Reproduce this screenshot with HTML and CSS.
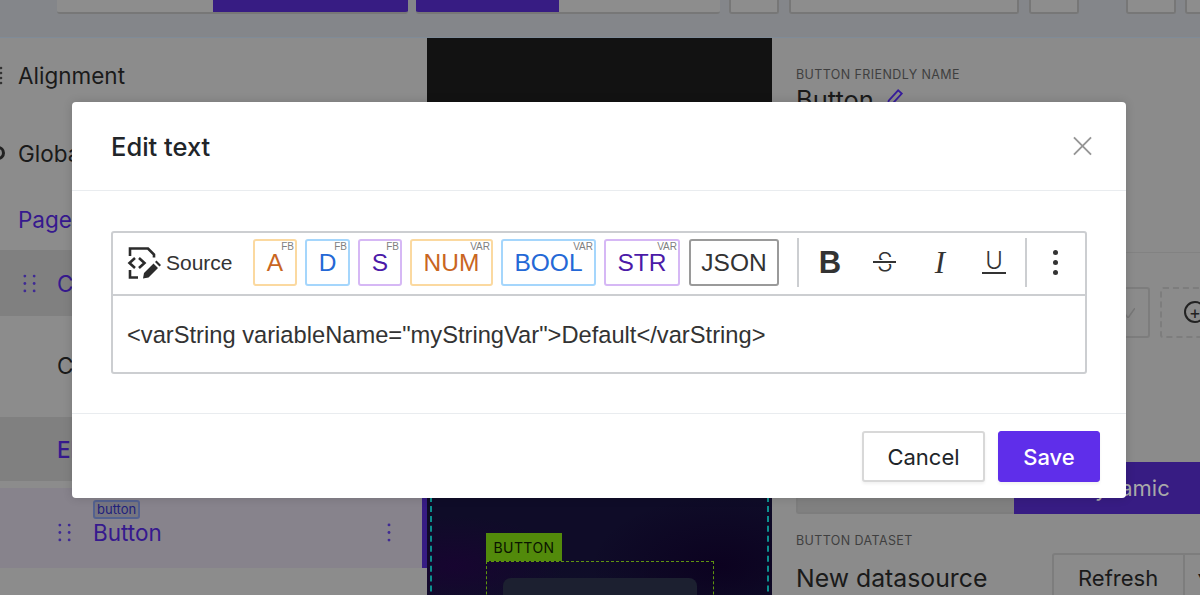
FILE: index.html
```html
<!DOCTYPE html>
<html lang="en">
<head>
<meta charset="utf-8">
<title>Edit text</title>
<link rel="stylesheet" href="styles.css">
</head>
<body>
<div class="page">
  <header class="topbar">
    <div class="seg seg-a"><span class="seg-plain seg-p1"></span><span class="seg-on seg-p2"></span></div>
    <div class="seg seg-b"><span class="seg-on seg-p3"></span><span class="seg-plain seg-p4"></span></div>
    <div class="tb tb-1"></div>
    <div class="tb tb-2"></div>
    <div class="tb tb-1"></div>
    <div class="tb tb-3"></div>
    <div class="tb tb-4"></div>
  </header>
  <main class="work">
    <aside class="side">
      <div class="row row-align">
        <svg class="cut-dots" viewBox="0 0 4 20"><g class="dark-dot"><circle cx="2" cy="2" r="1.300"/><circle cx="2" cy="7" r="1.300"/><circle cx="2" cy="12" r="1.300"/><circle cx="2" cy="17" r="1.300"/></g></svg>
        <span>Alignment</span>
      </div>
      <div class="row row-global"><span class="ring"></span><span>Global</span></div>
      <div class="row row-page"><span class="purple">Pages</span></div>
      <div class="row row-dark row-c">
        <svg class="grip" viewBox="0 0 14 20"><g class="grip-dot"><circle cx="2" cy="2" r="1.500"/><circle cx="12" cy="2" r="1.500"/><circle cx="2" cy="10" r="1.500"/><circle cx="12" cy="10" r="1.500"/><circle cx="2" cy="18" r="1.500"/><circle cx="12" cy="18" r="1.500"/></g></svg>
        <span class="purple">Content</span>
      </div>
      <div class="row row-plain"><span>Content</span></div>
      <div class="row row-dark row-e"><span class="purple strong">Elements</span></div>
      <div class="row row-selected">
        <svg class="grip grip-sel" viewBox="0 0 14 20"><g class="grip-dot"><circle cx="2" cy="2" r="1.500"/><circle cx="12" cy="2" r="1.500"/><circle cx="2" cy="10" r="1.500"/><circle cx="12" cy="10" r="1.500"/><circle cx="2" cy="18" r="1.500"/><circle cx="12" cy="18" r="1.500"/></g></svg>
        <div class="sel-name"><span class="tag">button</span><span class="purple">Button</span></div>
        <svg class="kebab" viewBox="0 0 4 20"><g class="grip-dot"><circle cx="2" cy="2" r="1.500"/><circle cx="2" cy="10" r="1.500"/><circle cx="2" cy="18" r="1.500"/></g></svg>
      </div>
    </aside>
    <section class="canvas">
      <div class="canvas-top"></div>
      <div class="canvas-body">
        <div class="frame">
          <div class="el-label">BUTTON</div>
          <div class="el-box"><div class="el-card"></div></div>
        </div>
      </div>
    </section>
    <aside class="props">
      <div class="label">BUTTON FRIENDLY NAME</div>
      <div class="name-line"><span>Button</span>
        <svg class="pencil" viewBox="0 0 20 20"><path d="M2 18l1-5L13.500 1.500l4 3.500L7 16.500z"/></svg>
      </div>
      <div class="rule"></div>
      <div class="picker">
        <div class="select"><svg class="chev" viewBox="0 0 14 10"><path d="M0 0l7 10 7-10"/></svg></div>
        <div class="add"><span class="plus">+</span></div>
      </div>
      <div class="modes"><div class="mode-off"></div><div class="mode-on">Dynamic</div></div>
      <div class="label label-ds">BUTTON DATASET</div>
      <div class="ds"><span class="ds-name">New datasource</span><div class="refresh"><span class="refresh-text">Refresh</span><span class="refresh-more">▾</span></div></div>
    </aside>
  </main>
</div>

<div class="modal" role="dialog" aria-label="Edit text">
  <div class="modal-head">
    <h2 class="modal-title">Edit text</h2>
    <svg class="close" viewBox="0 0 20 20"><path d="M1 1l18 18M19 1L1 19"/></svg>
  </div>
  <div class="modal-body">
    <div class="editor">
      <div class="toolbar">
        <div class="source">
          <svg class="source-icon" viewBox="0 0 32 32">
            <path class="si" d="M2 9V1.500h18l6 6v3M2 23v7.500h8"/>
            <path class="si" d="M7 11l-5.500 5 5.500 5M11 11l5.500 5-5.500 5"/>
            <path class="si-fill" d="M15 31.500l1-5.500 9.500-9.500 4.500 4.500-9.500 9.500zM27 15l1.500-1.500 4.500 4.500-1.500 1.500z"/>
          </svg>
          <span>Source</span>
        </div>
        <button class="tk tk-orange tk-a">A<sup>FB</sup></button>
        <button class="tk tk-blue tk-d">D<sup>FB</sup></button>
        <button class="tk tk-violet tk-s">S<sup>FB</sup></button>
        <button class="tk tk-orange tk-num">NUM<sup>VAR</sup></button>
        <button class="tk tk-blue tk-bool">BOOL<sup>VAR</sup></button>
        <button class="tk tk-violet tk-str">STR<sup>VAR</sup></button>
        <button class="tk tk-json">JSON</button>
        <span class="sep sep-1"></span>
        <span class="fmt fmt-b">B</span>
        <span class="fmt fmt-s">S</span>
        <span class="fmt fmt-i">I</span>
        <span class="fmt fmt-u"><span class="u-letter">U</span></span>
        <span class="sep sep-2"></span>
        <svg class="more" viewBox="0 0 5 25"><circle cx="2.500" cy="2.500" r="2.500"/><circle cx="2.500" cy="12.500" r="2.500"/><circle cx="2.500" cy="22.500" r="2.500"/></svg>
      </div>
      <div class="content">&lt;varString variableName="myStringVar"&gt;Default&lt;/varString&gt;</div>
    </div>
  </div>
  <div class="modal-foot">
    <button class="btn btn-cancel">Cancel</button>
    <button class="btn btn-save">Save</button>
  </div>
</div>
</body>
</html>
```
FILE: styles.css
```css
* { box-sizing: border-box; }
html, body { margin: 0; height: 595px; overflow: hidden; }
body { font-family: Inter, "Liberation Sans", sans-serif; color: #1a1a1a; background: #8b8b8b; position: relative; }
.page { width: 1200px; height: 595px; display: flex; flex-direction: column; overflow: hidden; }

.topbar { height: 38px; flex: none; background: #84868a; border-bottom: 1px solid #7f8b98; display: flex; align-items: flex-start; padding-left: 57px; }
.seg { display: flex; flex: none; height: 14px; border-bottom: 2px solid #777; border-radius: 0 0 3px 3px; overflow: hidden; }
.seg span { flex: none; }
.seg-a { width: 351px; }
.seg-b { width: 304px; margin-left: 8px; }
.seg-plain { background: #8d8d8d; }
.seg-on { background: #371c83; }
.seg-p1 { width: 156px; }
.seg-p2 { width: 195px; }
.seg-p3 { width: 143px; }
.seg-p4 { width: 161px; }
.tb { height: 14px; flex: none; background: #8d8d8d; border: 2px solid #777; border-top: 0; border-radius: 0 0 3px 3px; margin-left: 10px; }
.seg-b + .tb { margin-left: 9px; }
.tb-1 { width: 50px; }
.tb-2 { width: 230px; }
.tb-3 { width: 50px; margin-left: 47px; }
.tb-4 { width: 40px; margin-left: 9px; }

.work { flex: 1; display: grid; grid-template-columns: 427px 345px 428px; min-height: 0; }

.side { background: #8c8c8c; display: flex; flex-direction: column; font-size: 22.500px; overflow: hidden; }
.row { display: flex; align-items: center; padding-left: 18px; flex: none; position: relative; }
.row-align { height: 75px; }
.row-global { height: 80px; }
.row-page { height: 52px; margin-bottom: 5px; }
.row-c { height: 66px; padding-left: 23px; }
.row-plain { height: 101px; padding: 0 0 3px 57px; }
.row-e { height: 64px; padding-left: 57px; }
.row-dark { background: #808080; }
.row-selected { height: 80px; margin-top: 7px; padding-left: 58px; background: #87838c; border-right: 5px solid #371c83; }
.purple { color: #36198e; }
.strong { font-weight: 500; }
.cut-dots { position: absolute; left: -1px; top: 28px; width: 4px; height: 20px; }
.dark-dot { fill: #333; }
.ring { position: absolute; left: -9px; top: 33px; width: 14px; height: 14px; border: 3px solid #222; border-radius: 50%; }
.grip { width: 13px; height: 19px; flex: none; margin-right: 21px; }
.grip-dot { fill: #3f2a94; }
.grip-sel { margin-top: 8px; margin-right: 22px; }
.sel-name { display: flex; flex-direction: column; align-items: flex-start; font-size: 22.500px; line-height: 28px; margin-top: -10px; }
.tag { font-size: 13px; line-height: 15px; color: #21217c; padding: 0 2px; border: 2px solid #53618f; border-radius: 3px; background: #767580; }
.kebab { width: 4px; height: 19px; position: absolute; left: 387px; top: 35px; }

.canvas { display: flex; flex-direction: column; overflow: hidden; }
.canvas-top { height: 120px; background: #121212; flex: none; }
.canvas-body { flex: 1; padding: 0 3px; background: radial-gradient(ellipse 110px 50px at 8% 78%, #170530 0, rgba(23,5,48,0) 100%), radial-gradient(ellipse 130px 70px at 85% 78%, #0c0220 0, rgba(12,2,32,0) 100%), linear-gradient(180deg, #0f0c28 0, #0f0c28 78%, #10152c 93%, #11172b 100%); display: flex; }
.frame { flex: 1; padding: 375px 0 0 54px; border-left: 2px dashed #0d8f8f; border-right: 2px dashed #0d8f8f; }
.el-label { width: 76px; height: 28px; background: #528a0b; color: #0a1400; font-size: 14px; letter-spacing: .4px; display: flex; align-items: center; justify-content: center; }
.el-box { width: 228px; height: 120px; border: 1px dashed #5f9410; padding: 16px; }
.el-card { height: 100px; background: #1c2030; border-radius: 8px; }

.props { background: #8b8b8b; padding: 29px 0 0 24px; display: flex; flex-direction: column; overflow: hidden; }
.label { font-size: 12.500px; letter-spacing: .4px; color: #3f3f3f; line-height: 16px; flex: none; }
.name-line { display: flex; align-items: center; gap: 12px; font-size: 25.500px; line-height: 30px; margin-top: 2px; flex: none; }
.pencil { width: 18px; height: 18px; fill: none; stroke: #371c9b; stroke-width: 2; margin-top: -4px; }
.rule { height: 1px; background: #828282; margin: 137px 0 0 -24px; flex: none; }
.picker { display: flex; margin-top: 34px; margin-left: 264px; gap: 10px; flex: none; }
.select { width: 90px; height: 51px; flex: none; border: 2px solid #7d7d7d; border-radius: 3px; display: flex; align-items: center; justify-content: flex-end; padding-right: 13px; }
.chev { width: 14px; height: 10px; fill: none; stroke: #777; stroke-width: 1.500; flex: none; }
.add { width: 100px; height: 51px; flex: none; border: 2px dashed #7d7d7d; border-radius: 3px; padding: 12px 0 0 22px; }
.plus { display: flex; width: 22px; height: 22px; border: 2px solid #222; border-radius: 50%; align-items: center; justify-content: center; font-size: 18px; color: #222; }
.modes { display: flex; height: 52px; margin-top: 124px; flex: none; }
.mode-off { width: 218px; border: 2px solid #7d7d7d; border-right: 0; border-radius: 3px 0 0 3px; background: #808080; }
.mode-on { flex: 1; background: #371c83; color: #a9a9a9; font-size: 22px; display: flex; align-items: center; padding-left: 65px; }
.label-ds { margin-top: 19px; }
.ds { display: flex; align-items: center; font-size: 24.800px; margin-top: 4px; flex: none; }
.ds-name { width: 256px; flex: none; }
.refresh { display: flex; flex: none; width: 160px; height: 50px; border: 2px solid #7d7d7d; border-radius: 3px; font-size: 22px; align-items: center; padding-left: 24px; }
.refresh-text { width: 105px; flex: none; }
.refresh-more { border-left: 2px solid #7d7d7d; height: 100%; padding: 12px 0 0 13px; font-size: 14px; flex: none; }

.modal { position: absolute; left: 72px; top: 102px; width: 1054px; height: 396px; background: #fff; border-radius: 4px; display: flex; flex-direction: column; box-shadow: 0 0 10px rgba(0,0,0,.15); z-index: 5; }
.modal-head { height: 89px; flex: none; border-bottom: 1px solid #e9ecef; display: flex; align-items: center; justify-content: space-between; padding: 0 34px 0 39px; }
.modal-title { margin: 0; font-size: 25.500px; font-weight: 500; color: #212529; }
.close { width: 19px; height: 20px; fill: none; stroke: #969696; stroke-width: 2; }
.modal-body { flex: 1; padding: 40px 39px 0; border-bottom: 1px solid #e9ecef; }
.editor { width: 976px; height: 143px; border: 2px solid #ccced1; border-radius: 3px; display: flex; flex-direction: column; font-family: "Liberation Sans", Arial, sans-serif; color: #333; }
.toolbar { height: 63px; flex: none; border-bottom: 2px solid #ccced1; display: flex; align-items: center; padding: 0 0 2px 15px; }
.source { display: flex; align-items: center; gap: 6px; font-size: 21px; width: 125px; flex: none; }
.source-icon { width: 32px; height: 32px; flex: none; overflow: visible; }
.si { fill: none; stroke: #2b2b2b; stroke-width: 2.600; }
.si-fill { fill: #2b2b2b; }
.tk { font-family: inherit; position: relative; height: 47px; padding: 0; background: #fff; border: 2px solid; border-radius: 3px; font-size: 24.500px; display: flex; align-items: center; justify-content: center; margin-right: 8px; flex: none; }
.tk sup { position: absolute; right: 1px; top: 1px; font-size: 10px; line-height: 10px; color: #808080; }
.tk-a { width: 44px; }
.tk-d { width: 45px; }
.tk-s { width: 44px; }
.tk-num { width: 83px; }
.tk-bool { width: 95px; }
.tk-str { width: 76px; margin-right: 9px; }
.tk-json { width: 90px; border: 2px solid #9a9a9a; color: #333; margin-right: 0; }
.tk-orange { border-color: #fbd9a0; color: #c9661f; }
.tk-blue { border-color: #a5d6fc; color: #2468d6; }
.tk-violet { border-color: #d6b8f5; color: #4b1aa8; }
.sep { width: 2px; height: 49px; background: #ccced1; flex: none; }
.sep-1 { margin-left: 18px; margin-right: 19px; }
.sep-2 { margin-left: 19px; margin-right: 26px; }
.fmt { width: 24px; flex: none; line-height: 1; text-align: center; color: #333; margin-right: 31px; position: relative; }
.fmt-b { font-weight: 700; font-size: 31px; }
.fmt-s { font-size: 25px; font-family: Inter, sans-serif; font-weight: 300; }
.fmt-s::after { content: ""; position: absolute; left: 0; right: 1px; top: 11px; height: 2px; background: #333; box-shadow: 0 0 0 1px #fff; }
.fmt-i { font-style: italic; font-family: "Liberation Serif", serif; font-size: 31px; }
.fmt-u { font-size: 24px; font-family: Inter, sans-serif; font-weight: 300; line-height: 23px; height: 25px; margin: -2px 0 0 -1px; border-bottom: 2px solid #333; }
.more { width: 5px; height: 25px; fill: #333; flex: none; }
.content { flex: 1; padding: 2px 14px 0; display: flex; align-items: center; font-size: 23.700px; color: #333; }
.modal-foot { height: 84px; flex: none; display: flex; justify-content: flex-end; align-items: center; gap: 13px; padding-right: 26px; padding-top: 1px; }
.btn { font-family: Inter, sans-serif; font-size: 22px; border-radius: 3px; height: 51px; display: flex; align-items: center; justify-content: center; box-shadow: 0 2px 3px rgba(0,0,0,.06); }
.btn-cancel { width: 123px; background: #fff; border: 2px solid #d8d8d8; color: #212529; }
.btn-save { width: 102px; background: #5f2eea; border: 1px solid #5f2eea; color: #fff; font-weight: 500; }
```
